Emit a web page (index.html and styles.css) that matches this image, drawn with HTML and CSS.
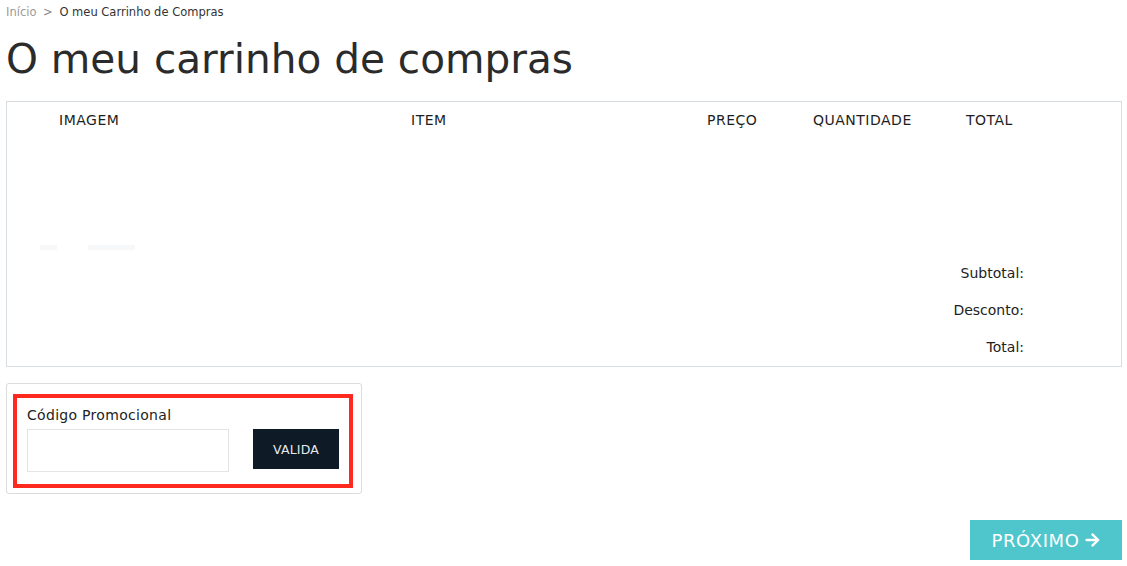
FILE: index.html
```html
<!DOCTYPE html>
<html lang="pt">
<head>
<meta charset="utf-8">
<title>O meu carrinho de compras</title>
<link rel="stylesheet" href="styles.css">
</head>
<body>
<div class="page">
  <nav class="breadcrumb">
    <a class="crumb-link" href="#">Início</a>
    <span class="crumb-sep">&gt;</span>
    <span class="crumb-current">O meu Carrinho de Compras</span>
  </nav>

  <h1 class="title">O meu carrinho de compras</h1>

  <section class="cart">
    <div class="cart-head">
      <span>IMAGEM</span>
      <span>ITEM</span>
      <span>PREÇO</span>
      <span>QUANTIDADE</span>
      <span>TOTAL</span>
    </div>
    <div class="cart-body">
      <div class="ghost-row">
        <span class="ghost ghost-a"></span>
        <span class="ghost ghost-b"></span>
      </div>
    </div>
    <div class="totals">
      <div class="total-row">Subtotal:</div>
      <div class="total-row">Desconto:</div>
      <div class="total-row">Total:</div>
    </div>
  </section>

  <section class="promo">
    <div class="promo-inner">
      <label class="promo-label" for="code">Código Promocional</label>
      <div class="promo-row">
        <input id="code" class="promo-input" type="text">
        <button class="promo-btn" type="button">VALIDA</button>
      </div>
    </div>
  </section>

  <div class="actions">
    <button class="next-btn" type="button">PRÓXIMO
      <svg class="next-icon" viewBox="0 0 448 512" aria-hidden="true"><path fill="currentColor" d="M190.5 66.9l22.2-22.2c9.4-9.4 24.6-9.4 33.9 0L441 239c9.4 9.4 9.4 24.6 0 33.9L246.6 467.3c-9.4 9.4-24.6 9.4-33.9 0l-22.2-22.2c-9.5-9.5-9.3-25 .4-34.3L311.4 296H24c-13.3 0-24-10.7-24-24v-32c0-13.3 10.7-24 24-24h287.4L190.9 101.2c-9.8-9.3-10-24.8-.4-34.3z"/></svg>
    </button>
  </div>
</div>
</body>
</html>
```
FILE: styles.css
```css
* { box-sizing: border-box; }

html, body {
  margin: 0;
  padding: 0;
  background: #fff;
}

body {
  font-family: "DejaVu Sans", "Noto Sans", sans-serif;
  color: #222;
}

.page {
  padding: 0 5px 0 6px;
}

.breadcrumb {
  font-size: 11.5px;
  line-height: 14px;
  padding-top: 5px;
  color: #333;
}

.crumb-link {
  color: #9a9a9a;
  text-decoration: none;
}

.crumb-sep {
  color: #888;
  margin: 0 3px;
}

.title {
  font-size: 40.6px;
  font-weight: 400;
  color: #2b2b2b;
  line-height: 48px;
  margin: 16px 0 0 0;
}

.cart {
  margin-top: 18px;
  border: 1px solid #d8dde2;
  height: 266px;
  display: flex;
  flex-direction: column;
}

.cart-head {
  display: grid;
  grid-template-columns: 352px 296px 106px 153px 1fr;
  padding-left: 52px;
  padding-top: 9px;
  font-size: 14px;
  letter-spacing: 0.5px;
  line-height: 18px;
  color: #1e1e1e;
}

.cart-body {
  flex: 1;
  display: flex;
  align-items: flex-end;
  padding-bottom: 14px;
}

.ghost-row {
  display: flex;
  gap: 31px;
  padding-left: 33px;
}

.ghost {
  height: 5px;
  background: #f7f8f9;
}

.ghost-a { width: 17px; }
.ghost-b { width: 47px; }

.totals {
  display: flex;
  flex-direction: column;
  align-items: flex-end;
  padding-right: 97px;
  padding-bottom: 10px;
  gap: 19px;
  font-size: 14px;
  line-height: 18px;
  color: #222;
}

.promo {
  margin-top: 16px;
  width: 356px;
  height: 111px;
  border: 1px solid #dcdcdc;
  border-radius: 3px;
  padding: 10px 8px 5px 6px;
}

.promo-inner {
  border: 4px solid #ff2a1f;
  height: 100%;
  padding: 8px 10px 0 10px;
}

.promo-label {
  display: block;
  font-size: 14px;
  letter-spacing: 0.3px;
  line-height: 18px;
  color: #222;
}

.promo-row {
  display: flex;
  align-items: flex-start;
  gap: 24px;
  margin-top: 5px;
}

.promo-input {
  width: 202px;
  height: 43px;
  border: 1px solid #e4e4e4;
  margin: 0;
  padding: 0 8px;
  font: inherit;
}

.promo-btn {
  width: 89px;
  height: 40px;
  border: 0;
  background: #0e1b26;
  color: #e6e9ec;
  font-family: inherit;
  font-size: 12.5px;
  letter-spacing: 0.2px;
  padding: 0;
}

.actions {
  display: flex;
  justify-content: flex-end;
  margin-top: 26px;
}

.next-btn {
  width: 152px;
  height: 40px;
  border: 0;
  background: #4fc6cc;
  color: #fff;
  font-family: inherit;
  font-size: 18px;
  letter-spacing: 0.6px;
  display: flex;
  align-items: center;
  justify-content: center;
  gap: 6px;
  padding: 0;
}

.next-icon {
  width: 15px;
  height: 16px;
}
```
